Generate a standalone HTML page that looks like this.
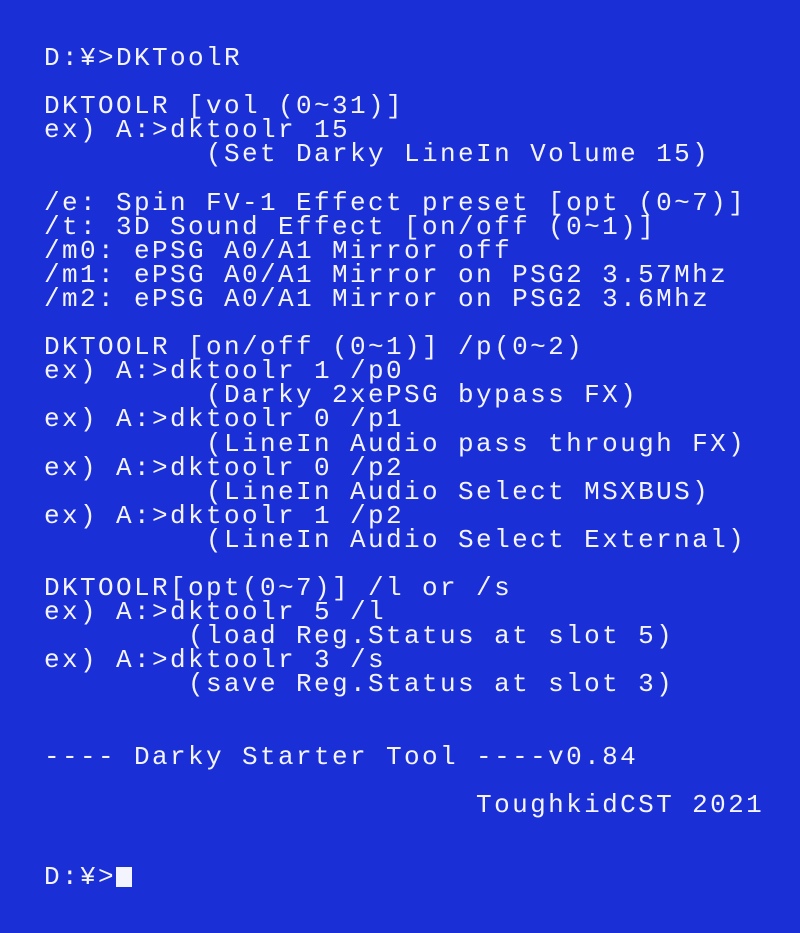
<!DOCTYPE html>
<html><head><meta charset="utf-8"><style>
html,body{margin:0;padding:0;background:#1a2fd6;width:800px;height:933px;overflow:hidden}
pre{position:absolute;left:44px;top:46px;margin:0;font-family:"Liberation Mono","Noto Sans CJK JP",monospace;font-size:26px;letter-spacing:2.4px;line-height:24.1px;color:#f4f4ff}
.cur{display:inline-block;width:16px;height:20px;background:#f4f4ff;vertical-align:-3px}
</style></head><body>
<pre>D:¥&gt;DKToolR

DKTOOLR [vol (0~31)]
ex) A:&gt;dktoolr 15
         (Set Darky LineIn Volume 15)

/e: Spin FV-1 Effect preset [opt (0~7)]
/t: 3D Sound Effect [on/off (0~1)]
/m0: ePSG A0/A1 Mirror off
/m1: ePSG A0/A1 Mirror on PSG2 3.57Mhz
/m2: ePSG A0/A1 Mirror on PSG2 3.6Mhz

DKTOOLR [on/off (0~1)] /p(0~2)
ex) A:&gt;dktoolr 1 /p0
         (Darky 2xePSG bypass FX)
ex) A:&gt;dktoolr 0 /p1
         (LineIn Audio pass through FX)
ex) A:&gt;dktoolr 0 /p2
         (LineIn Audio Select MSXBUS)
ex) A:&gt;dktoolr 1 /p2
         (LineIn Audio Select External)

DKTOOLR[opt(0~7)] /l or /s
ex) A:&gt;dktoolr 5 /l
        (load Reg.Status at slot 5)
ex) A:&gt;dktoolr 3 /s
        (save Reg.Status at slot 3)


---- Darky Starter Tool ----v0.84

                        ToughkidCST 2021


D:¥&gt;<span class="cur"></span></pre>
</body></html>
